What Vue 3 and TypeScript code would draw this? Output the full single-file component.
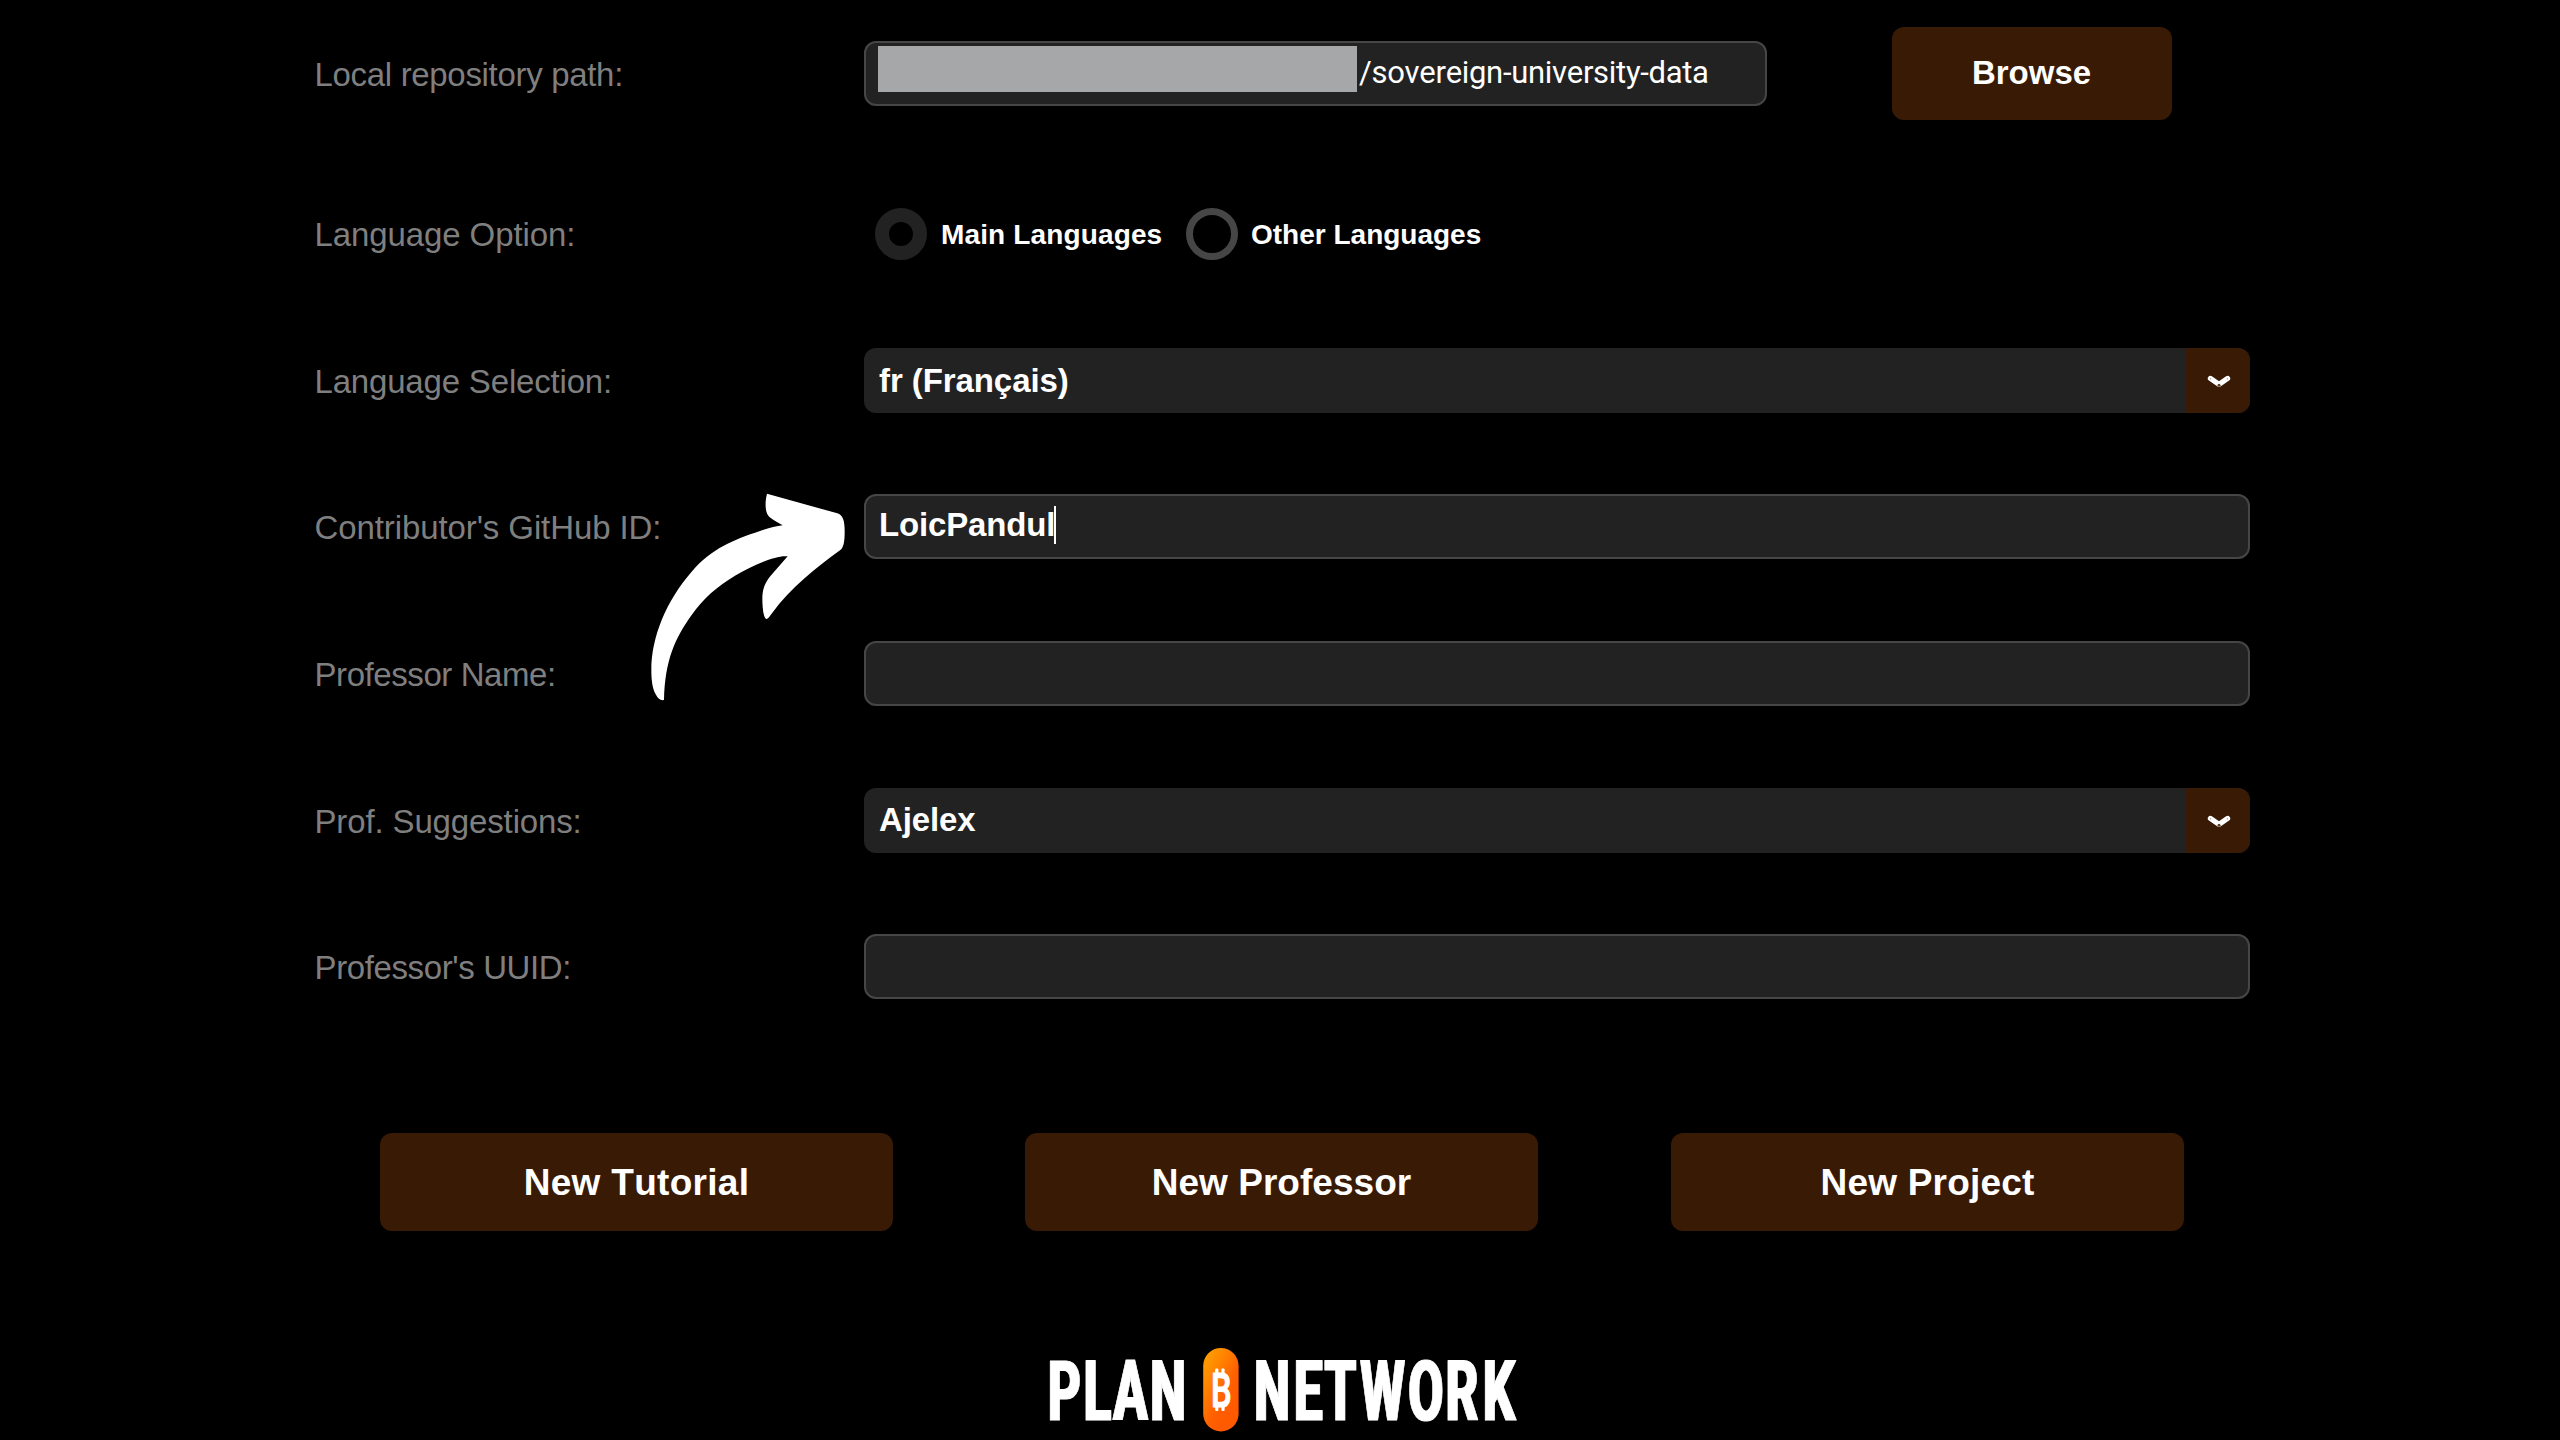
<script setup lang="ts">
type Kind = 'entry' | 'select'

interface Field {
  id: string
  label: string
  labelSpacing: number
  kind: Kind
  value: string
  valueSpacing: number
  focused?: boolean
}

interface Action {
  text: string
  spacing: number
}

const fields: Field[] = [
  { id: 'language', label: 'Language Selection:', labelSpacing: -0.18, kind: 'select', value: 'fr (Français)', valueSpacing: -0.08 },
  { id: 'github', label: "Contributor's GitHub ID:", labelSpacing: -0.1, kind: 'entry', value: 'LoicPandul', valueSpacing: -0.15, focused: true },
  { id: 'name', label: 'Professor Name:', labelSpacing: -0.42, kind: 'entry', value: '', valueSpacing: 0 },
  { id: 'suggestions', label: 'Prof. Suggestions:', labelSpacing: -0.14, kind: 'select', value: 'Ajelex', valueSpacing: -0.1 },
  { id: 'uuid', label: "Professor's UUID:", labelSpacing: -0.38, kind: 'entry', value: '', valueSpacing: 0 },
]

const actions: Action[] = [
  { text: 'New Tutorial', spacing: 0.3 },
  { text: 'New Professor', spacing: 0.04 },
  { text: 'New Project', spacing: 0.2 },
]

// Horizontal squeeze of the wordmark; letter centres are given in page pixels.
const squeeze = 0.6
const plan = [24.3, 57.4, 90.5, 128].map((x) => x / squeeze).join(' ')
const network = [232, 268.2, 300.4, 342.5, 385.9, 422, 459].map((x) => x / squeeze).join(' ')
</script>

<template>
  <main class="page">
    <section class="row path-row">
      <label class="label path-label">Local repository path:</label>
      <div class="entry path-entry">
        <span class="mask"></span>
        <span class="path-text">/sovereign-university-data</span>
      </div>
      <button class="btn browse">Browse</button>
    </section>

    <section class="row option-row">
      <label class="label option-label">Language Option:</label>
      <div class="radios">
        <span class="radio selected"></span>
        <span class="radio-text main-text">Main Languages</span>
        <span class="radio"></span>
        <span class="radio-text">Other Languages</span>
      </div>
    </section>

    <div class="fields">
      <section v-for="f in fields" :key="f.id" class="row" :class="f.id">
        <label class="label" :style="{ letterSpacing: f.labelSpacing + 'px' }">{{ f.label }}</label>
        <div :class="f.kind" class="control">
          <span class="value" :style="{ letterSpacing: f.valueSpacing + 'px' }">{{ f.value }}</span>
          <i v-if="f.focused" class="caret"></i>
          <span v-if="f.kind === 'select'" class="drop">
            <svg width="26" height="16" viewBox="0 0 26 16">
              <path d="M4.4 4.4 L13 10.4 L21.6 4.4" fill="none" stroke="#fff" stroke-width="5.2" stroke-linecap="round" stroke-linejoin="round" />
              <circle cx="4.6" cy="4.8" r="0.7" fill="#a89a90" />
              <circle cx="21.4" cy="4.8" r="0.7" fill="#a89a90" />
              <circle cx="13" cy="11.2" r="1.5" fill="#5a3a22" />
            </svg>
          </span>
        </div>
      </section>
    </div>

    <div class="actions">
      <button v-for="a in actions" :key="a.text" class="btn action" :style="{ letterSpacing: a.spacing + 'px' }">{{ a.text }}</button>
    </div>

    <footer class="brand">
      <svg width="484" height="100" viewBox="0 0 484 100">
        <defs>
          <linearGradient id="pill" x1="0" y1="0.1" x2="0.6" y2="0.85">
            <stop offset="0" stop-color="#ff9f00" />
            <stop offset="0.3" stop-color="#ff8a00" />
            <stop offset="0.75" stop-color="#ff6000" />
            <stop offset="1" stop-color="#ff5a00" />
          </linearGradient>
          <filter id="widen" x="0" y="0" width="484" height="100" filterUnits="userSpaceOnUse" color-interpolation-filters="sRGB">
            <feMorphology operator="dilate" radius="1 0" />
          </filter>
        </defs>
        <g filter="url(#widen)">
          <g class="word" :transform="`scale(${squeeze} 1)`">
            <text :x="plan" y="80">PLAN</text>
            <text :x="network" y="80">NETWORK</text>
          </g>
        </g>
        <rect x="163.2" y="8" width="35.4" height="83.4" rx="17.7" fill="url(#pill)" />
        <g fill="#fff">
          <rect x="175.2" y="28.6" width="3.2" height="6" rx="1" />
          <rect x="181.4" y="28.6" width="3.2" height="6" rx="1" />
          <rect x="175.2" y="65" width="3.2" height="6" rx="1" />
          <rect x="181.4" y="65" width="3.2" height="6" rx="1" />
        </g>
        <text class="coin" transform="translate(181.2 67.4) scale(0.68 1)" x="0" y="0">B</text>
      </svg>
    </footer>

    <svg class="pointer" width="197" height="212" viewBox="90 90 591 636">
      <path
        fill="#fff"
        d="M441 101 L652 160 C668 165 674 180 674 215 C674 245 671 262 660 271 C590 322 510 385 456 460 C448 471 443 478 439 477 C431 474 427 445 427 415 C427 385 437 365 452 347 L503 289 C470 284 400 315 345 347 C290 380 250 415 215 465 C165 535 135 600 132 720 C122 722 115 718 107 703 C97 685 94 660 94 630 C94 530 140 420 215 335 C275 265 340 240 420 213 C445 205 470 198 488 196 C470 184 452 178 443 164 C435 150 435 125 441 101Z"
      />
    </svg>
  </main>
</template>

<style>
html,
body {
  background: #000;
}
</style>

<style scoped>
.page {
  position: relative;
  box-sizing: border-box;
  width: 2560px;
  height: 1440px;
  padding-top: 27px;
  overflow: hidden;
  background: #000;
  font-family: 'Liberation Sans', Arial, sans-serif;
  font-kerning: none;
}
.row {
  display: flex;
  align-items: center;
  height: 65px;
  padding-left: 314.5px;
}
.path-row {
  height: 93px;
}
.option-row {
  height: 52px;
  margin-top: 88px;
}
.fields {
  display: flex;
  flex-direction: column;
  gap: 81px;
  height: 651px;
  margin-top: 88px;
}
.name {
  margin-top: 1px;
}
.suggestions {
  margin-top: 1px;
}
.label {
  flex: none;
  width: 549.5px;
  padding-top: 2px;
  font-size: 33px;
  line-height: 40px;
  color: #7f7f7f;
  white-space: nowrap;
}
.path-label {
  letter-spacing: -0.32px;
}
.option-label {
  letter-spacing: -0.1px;
}
.control {
  width: 1386px;
}
.entry,
.select {
  display: flex;
  align-items: center;
  box-sizing: border-box;
  height: 65px;
  border-radius: 12px;
  background: #222;
}
.entry {
  border: 2px solid #464646;
  padding-left: 12px;
}
.select {
  padding-left: 15px;
  overflow: hidden;
}
.path-entry {
  width: 903px;
}
.mask {
  width: 479px;
  height: 46px;
  margin-top: -9px;
  background: #a6a7a9;
}
.path-text {
  margin-left: 2px;
  margin-top: -3px;
  width: 395px;
  font-family: Roboto, sans-serif;
  font-size: 31px;
  letter-spacing: -0.3px;
  color: #fff;
  white-space: nowrap;
}
.value {
  font-size: 33px;
  line-height: 40px;
  font-weight: 700;
  color: #fff;
  white-space: nowrap;
}
.suggestions .value {
  margin-top: -1px;
}
.entry .value {
  margin-left: 1px;
  margin-top: -4px;
}
.caret {
  width: 2px;
  height: 38px;
  margin: -3px 0 0 -1px;
  background: #fff;
}
.drop {
  display: flex;
  align-items: center;
  justify-content: center;
  box-sizing: border-box;
  width: 64px;
  height: 100%;
  margin-left: auto;
  padding: 2px 0 0 2px;
  background: #381a05;
}
.btn {
  border: 0;
  padding: 0;
  border-radius: 12px;
  background: #381a05;
  color: #fff;
  font-family: inherit;
  font-weight: 700;
  font-kerning: none;
}
.browse {
  width: 280px;
  height: 93px;
  margin-left: 125px;
  padding: 0 1px 1px 0;
  font-size: 33px;
}
.radios {
  display: flex;
  align-items: center;
  padding-left: 11px;
}
.radio {
  box-sizing: border-box;
  width: 52px;
  height: 52px;
  border: 7px solid #464646;
  border-radius: 50%;
}
.radio.selected {
  border: 14px solid #222;
}
.radio-text {
  margin-left: 13px;
  padding-top: 1px;
  font-size: 28px;
  font-weight: 700;
  color: #fff;
}
.main-text {
  width: 245px;
  margin-left: 14px;
  letter-spacing: 0.14px;
}
.actions {
  display: flex;
  gap: 132px;
  margin: 134px 0 0 380px;
}
.action {
  width: 513px;
  height: 98px;
  padding-top: 1px;
  font-size: 37px;
}
.action:last-child {
  margin-left: 1px;
}
.brand {
  margin: 109px 0 0 1040px;
}
.brand svg {
  display: block;
}
.word text {
  font-family: Roboto, sans-serif;
  font-size: 84px;
  font-weight: 700;
  text-anchor: middle;
  fill: #fff;
  stroke: #fff;
  stroke-width: 1px;
  stroke-linejoin: round;
}
.coin {
  font-family: Roboto, sans-serif;
  font-size: 48px;
  font-weight: 500;
  text-anchor: middle;
  fill: #fff;
  stroke: #fff;
  stroke-width: 1.2px;
  stroke-linejoin: round;
}
.pointer {
  position: absolute;
  left: 650px;
  top: 490px;
}
</style>
